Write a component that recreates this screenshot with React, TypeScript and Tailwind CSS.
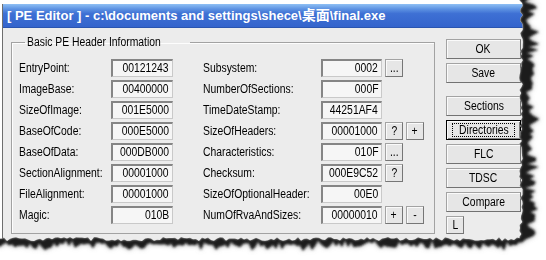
import React from "react";

type Row = [string, string, string, string, string[]];

const rows: Row[] = [
  ["EntryPoint:", "00121243", "Subsystem:", "0002", ["..."]],
  ["ImageBase:", "00400000", "NumberOfSections:", "000F", []],
  ["SizeOfImage:", "001E5000", "TimeDateStamp:", "44251AF4", []],
  ["BaseOfCode:", "000E5000", "SizeOfHeaders:", "00001000", ["?", "+"]],
  ["BaseOfData:", "000DB000", "Characteristics:", "010F", ["..."]],
  ["SectionAlignment:", "00001000", "Checksum:", "000E9C52", ["?"]],
  ["FileAlignment:", "00001000", "SizeOfOptionalHeader:", "00E0", []],
  ["Magic:", "010B", "NumOfRvaAndSizes:", "00000010", ["+", "-"]],
];

// the dialog font is narrower than anything installed, so squeeze it
function Txt({ children, right, center }: { children: React.ReactNode; right?: boolean; center?: boolean }) {
  const origin = right ? "origin-right" : center ? "origin-center" : "origin-left";
  return <span className={`inline-block whitespace-nowrap scale-x-[0.83] ${origin}`}>{children}</span>;
}

function ValueBox({ value, w }: { value: string; w: string }) {
  return (
    <div
      className={`${w} h-[18px] flex items-center justify-end pr-[3px] bg-[#f6f6f6] border-t-2 border-l-2 border-t-[#858585] border-l-[#858585] border-b border-r border-b-[#c9c9c9] border-r-[#c9c9c9] text-black`}
    >
      <Txt right>{value}</Txt>
    </div>
  );
}

function SmallButton({ label }: { label: string }) {
  return (
    <div className="w-[18px] h-[18px] flex items-center justify-center bg-[#e6e6e6] border border-[#a3a3a3] border-b-[#767676] border-r-[#767676] shadow-[inset_1px_1px_0_#fafafa] text-black leading-none">
      <Txt center>{label}</Txt>
    </div>
  );
}

function Button({ label, focused }: { label: string; focused?: boolean }) {
  if (focused) {
    return (
      <div className="w-[75px] h-[20px] flex items-center justify-center bg-[#e6e6e6] border border-black shadow-[inset_1px_1px_0_#fafafa,inset_-1px_-1px_0_#808080]">
        <span className="w-[63px] h-[14px] flex items-center justify-center border border-dotted border-black">
          <Txt center>{label}</Txt>
        </span>
      </div>
    );
  }
  return (
    <div className="w-[75px] h-[20px] flex items-center justify-center bg-[#e6e6e6] border border-[#a3a3a3] border-b-[#727272] border-r-[#727272] shadow-[inset_1px_1px_0_#fafafa]">
      <Txt center>{label}</Txt>
    </div>
  );
}

// torn paper edge on the right and bottom
function makeEdge() {
  let s = 12345;
  const r = () => {
    s = (s * 16807) % 2147483647;
    return s / 2147483647;
  };
  const edge: [number, number][] = [];
  const outer: [number, number][] = [];
  for (let y = -6; y <= 238; y += 3) {
    const x = 521 + (r() - 0.5) * 4;
    edge.push([x, y]);
    outer.push([x + 5 + r() * 12, y + 2]);
  }
  for (let x = 520; x >= -6; x -= 3) {
    const y = 239 + (r() - 0.5) * 4;
    edge.push([x, y]);
    outer.push([x + 2, y + 3 + r() * 7]);
  }
  return { edge, outer };
}

function TornEdge() {
  const { edge, outer } = makeEdge();
  const pts = (p: [number, number][]) => p.map(([x, y]) => `${x.toFixed(1)},${y.toFixed(1)}`).join(" L");
  const outside = `M560,-10 L${pts(edge)} L-10,270 L560,270 Z`;
  const band = `M${pts(edge)} L${pts([...outer].reverse())} Z`;
  return (
    <svg className="absolute inset-0 pointer-events-none" width="546" height="260" viewBox="0 0 546 260">
      <defs>
        <clipPath id="out">
          <path d={outside} />
        </clipPath>
        <filter id="b1" x="-10%" y="-10%" width="120%" height="120%">
          <feGaussianBlur stdDeviation="0.8" />
        </filter>
        <filter id="b2" x="-10%" y="-10%" width="120%" height="120%">
          <feGaussianBlur stdDeviation="2.4" />
        </filter>
      </defs>
      <path d={outside} fill="#ffffff" />
      <g clipPath="url(#out)">
        <path d={band} fill="#8a8a8a" filter="url(#b2)" />
        <path d={band} fill="#1c1c1c" filter="url(#b1)" />
      </g>
    </svg>
  );
}

export default function App() {
  return (
    <div className="relative w-[546px] h-[260px] overflow-hidden bg-white pt-[4px] pl-[2px] font-[family-name:'Liberation_Sans',sans-serif] text-[12.5px] text-black">
      <div className="w-[532px] h-[238px] flex flex-col bg-[#ececec] border-l border-[#6e6e6e]">
        {/* Title bar */}
        <div className="h-[24px] flex items-center pl-[4px] bg-[linear-gradient(#8fc0f4_0%,#5d92e2_22%,#3e70d4_42%,#3464cc_100%)] border-b border-[#2a55b0]">
          <span className="text-white font-bold text-[13px] font-[family-name:'Liberation_Sans','Noto_Sans_CJK_SC',sans-serif] whitespace-nowrap">
            {"[ PE Editor ] - c:\\documents and settings\\shece\\"}
            <span className="text-[14px]">桌面</span>
            {"\\final.exe"}
          </span>
        </div>

        <div className="flex pl-[8px] pt-[5px]">
          {/* Group box */}
          <fieldset className="w-[424px] h-[201px] border border-[#a2a2a2] shadow-[inset_1px_1px_0_#fdfdfd] pl-[7px] pt-[7px]">
            <legend className="ml-[6px] px-[2px]">
              <Txt>Basic PE Header Information</Txt>
            </legend>
            <div className="flex flex-col gap-[3px]">
              {rows.map(([l1, v1, l2, v2, btns]) => (
                <div key={l1} className="flex items-center h-[18px]">
                  <span className="w-[92px] pt-[2px]">
                    <Txt>{l1}</Txt>
                  </span>
                  <ValueBox value={v1} w="w-[62px]" />
                  <span className="w-[118px] ml-[30px] pt-[2px]">
                    <Txt>{l2}</Txt>
                  </span>
                  <ValueBox value={v2} w="w-[61px]" />
                  <div className="flex gap-[3px] ml-[3px]">
                    {btns.map((b) => (
                      <SmallButton key={b} label={b} />
                    ))}
                  </div>
                </div>
              ))}
            </div>
          </fieldset>

          {/* Right buttons */}
          <div className="flex flex-col ml-[11px] pt-[6px]">
            <div className="flex flex-col gap-[4px]">
              <Button label="OK" />
              <Button label="Save" />
            </div>
            <div className="flex flex-col gap-[4px] mt-[13px]">
              <Button label="Sections" />
              <Button label="Directories" focused />
              <Button label="FLC" />
              <Button label="TDSC" />
              <Button label="Compare" />
              <SmallButton label="L" />
            </div>
          </div>
        </div>
      </div>
      <TornEdge />
    </div>
  );
}
